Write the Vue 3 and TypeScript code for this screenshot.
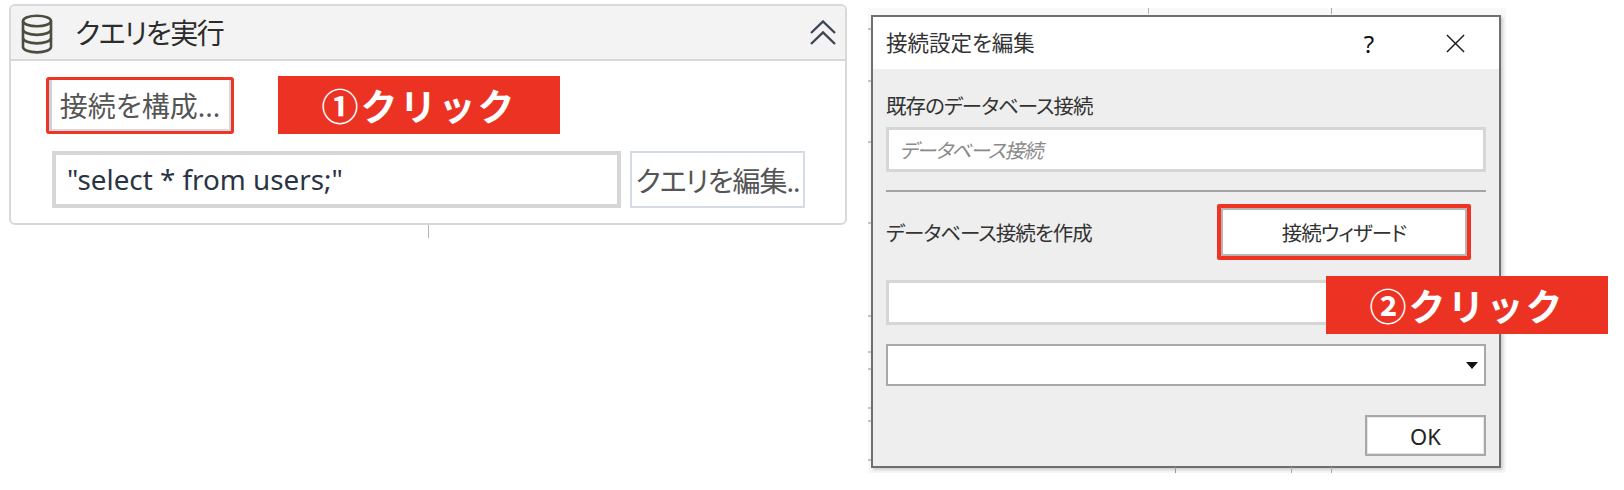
<script setup lang="ts">
const ticksLeft: number[] = [20, 72, 133, 214, 307, 343, 360, 399, 412, 451]
</script>

<template>
  <div class="page">
    <section class="card">
      <header class="card-head">
        <svg class="db" viewBox="0 0 32 40" fill="none" stroke="#4d4d3f" stroke-width="2.6">
          <ellipse cx="16" cy="7" rx="14" ry="5.2" />
          <path d="M2 7v26c0 3 6.2 5.4 14 5.4S30 36 30 33V7" />
          <path d="M2 15.500c0 3 6.200 5.400 14 5.400s14-2.400 14-5.400" />
          <path d="M2 24c0 3 6.200 5.400 14 5.400S30 27 30 24" />
        </svg>
        <span class="card-title">クエリを実行</span>
        <svg class="chev" viewBox="0 0 26 25" fill="none" stroke="#3c4654" stroke-width="2.400">
          <path d="M1 13 13 1.500 25 13" />
          <path d="M1 24 13 12.500 25 24" />
        </svg>
      </header>
      <div class="card-body">
        <div class="row-top">
          <button class="conn-btn">接続を構成...</button>
          <div class="tag">①クリック</div>
        </div>
        <div class="row-query">
          <div class="query">"select * from users;"</div>
          <button class="edit-btn">クエリを編集..</button>
        </div>
      </div>
      <i class="connector"></i>
    </section>

    <section class="dialog-wrap">
      <i v-for="y in ticksLeft" :key="y" class="tick" :style="{ top: y + 'px' }"></i>
      <i class="vtick vt1"></i>
      <i class="vtick vt2"></i>
      <i class="vtick vt3"></i>
      <i class="vtick vt4"></i>
      <i class="vtick vt5"></i>
      <div class="dialog">
        <header class="dlg-head">
          <span class="dlg-title">接続設定を編集</span>
          <span class="help">?</span>
          <svg class="close" viewBox="0 0 20 20" fill="none" stroke="#1a1a1a" stroke-width="1.500">
            <path d="M1 1 19 19M19 1 1 19" />
          </svg>
        </header>
        <div class="dlg-body">
          <div class="label first">既存のデータベース接続</div>
          <div class="field ph">データベース接続</div>
          <div class="divider"></div>
          <div class="row-create">
            <span class="label create">データベース接続を作成</span>
            <button class="wizard">接続ウィザード</button>
          </div>
          <div class="field blank"></div>
          <div class="combo"><i class="arrow"></i></div>
          <div class="foot"><button class="ok">OK</button></div>
        </div>
      </div>
      <div class="tag tag2">②クリック</div>
    </section>
  </div>
</template>

<style>
html, body { margin: 0; background: #fff; }
</style>

<style scoped>
.page {
  width: 1624px;
  height: 490px;
  overflow: hidden;
  display: flex;
  align-items: flex-start;
  box-sizing: border-box;
  padding: 4px 0 0 9px;
  background: #fff;
  font-family: "Noto Sans", "Noto Sans CJK JP", sans-serif;
  font-feature-settings: "palt";
  color: #333;
}
button { font-family: inherit; padding: 0; background: #fff; font-feature-settings: "palt"; }
.card {
  position: relative;
  width: 838px;
  height: 221px;
  box-sizing: border-box;
  border: 2px solid #d8d8d8;
  border-radius: 6px;
  flex: none;
}
.card-head {
  height: 53px;
  background: #f3f3f3;
  border-bottom: 2px solid #d8d8d8;
  border-radius: 4px 4px 0 0;
  display: flex;
  align-items: center;
  padding: 0 9px 0 10px;
}
.db { width: 32px; height: 40px; flex: none; margin-top: 2px; }
.card-title {
  font-size: 28px;
  letter-spacing: -1.400px;
  line-height: 30px;
  margin-left: 22px;
  flex: 1;
  color: #2c2c2c;
}
.chev { width: 26px; height: 25px; flex: none; }
.card-body { padding: 15px 0 0 35px; }
.row-top { display: flex; align-items: center; gap: 44px; }
.conn-btn {
  width: 188px;
  height: 57px;
  box-sizing: border-box;
  border: 3px solid #ee3524;
  border-radius: 3px;
  box-shadow: inset 3px 0 0 #c9d1de, inset -2px 0 0 #d5dbe6, inset 0 -2px 0 #d5dbe6;
  font-size: 28px;
  color: #555;
  white-space: nowrap;
  line-height: 1;
  padding-top: 2px;
}
.tag {
  width: 282px;
  height: 58px;
  background: #ec3323;
  color: #fff;
  font-weight: 700;
  font-size: 37px;
  letter-spacing: 2px;
  font-feature-settings: normal;
  display: flex;
  align-items: center;
  justify-content: center;
  font-family: "Noto Sans CJK JP", sans-serif;
  flex: none;
}
.row-query { display: flex; gap: 9px; margin: 17px 0 0 6px; }
.query {
  width: 569px;
  height: 57px;
  box-sizing: border-box;
  border: 4px solid #d6d6d6;
  background: #fff;
  font-size: 27.800px;
  line-height: 49px;
  padding-left: 11px;
  color: #2b3444;
}
.edit-btn {
  width: 175px;
  height: 57px;
  box-sizing: border-box;
  border: 2px solid #d5dbe6;
  font-size: 28px;
  letter-spacing: -1px;
  color: #555;
  white-space: nowrap;
  line-height: 1;
  overflow: hidden;
  padding-top: 2px;
}
.connector {
  position: absolute;
  left: 417px;
  top: 219px;
  width: 1px;
  height: 13px;
  background: #b5b5b5;
}

.dialog-wrap {
  position: relative;
  flex: none;
  width: 638px;
  height: 465px;
  margin: 4px 0 0 21px;
  padding: 7px 5px 5px 3px;
  box-sizing: border-box;
  background: #f9f9f9;
}
.tick {
  position: absolute;
  left: 0;
  width: 3px;
  height: 2px;
  background: #c4c4c4;
}
.vtick {
  position: absolute;
  width: 1px;
  height: 6px;
  background: #aab4c0;
}
.vt1 { left: 280px; top: 0; }
.vt2 { left: 463px; top: 0; background: #aaa; }
.vt3 { left: 307px; bottom: 0; background: #999; }
.vt4 { left: 423px; bottom: 0; background: #aaa; }
.vt5 { left: 463px; bottom: 0; background: #aaa; }
.dialog {
  width: 630px;
  height: 453px;
  box-sizing: border-box;
  border: 2px solid #6f6f6f;
  background: #eee;
  box-shadow: 2px 2px 3px rgba(0, 0, 0, 0.18);
}
.dlg-head {
  height: 52px;
  background: #fff;
  display: flex;
  align-items: center;
  padding-left: 13px;
}
.dlg-title { font-size: 21.500px; flex: 1; color: #333; line-height: 30px; }
.help { font-size: 24px; color: #111; width: 30px; text-align: center; font-family: "Noto Sans", sans-serif; margin-right: 62px; }
.close { width: 19px; height: 19px; margin-right: 34px; flex: none; }
.dlg-body { padding: 0 13px; }
.label { font-size: 20.500px; letter-spacing: -1px; line-height: 28px; color: #333; white-space: nowrap; }
.label.first { margin-top: 23px; }
.label.create { margin-top: 2px; }
.field {
  height: 45px;
  box-sizing: border-box;
  border: 3px solid #d6d6d6;
  background: #fff;
}
.ph {
  margin-top: 7px;
  font-size: 20px;
  letter-spacing: -1.250px;
  font-style: italic;
  color: #8b8b8b;
  padding-left: 10px;
  line-height: 41px;
}
.divider { height: 2px; background: #a3a3a3; margin-top: 18px; }
.row-create {
  display: flex;
  align-items: center;
  justify-content: space-between;
  height: 56px;
  margin-top: 12px;
  padding-right: 15px;
}
.wizard {
  width: 254px;
  height: 56px;
  box-sizing: border-box;
  border: 4px solid #ee3524;
  border-radius: 2px;
  box-shadow: inset 0 0 0 2px #b5b5b5;
  font-size: 20.500px;
  letter-spacing: -1px;
  color: #333;
}
.blank { margin-top: 20px; }
.combo {
  position: relative;
  margin-top: 19px;
  height: 42px;
  box-sizing: border-box;
  border: 2px solid #a8a8a8;
  background: #fff;
}
.arrow {
  position: absolute;
  right: 6px;
  top: 16px;
  width: 0;
  height: 0;
  border-left: 6px solid transparent;
  border-right: 6px solid transparent;
  border-top: 7px solid #111;
}
.foot { display: flex; justify-content: flex-end; margin-top: 29px; }
.ok {
  width: 121px;
  height: 41px;
  box-sizing: border-box;
  border: 2px solid #a8a8a8;
  box-shadow: inset 0 0 0 1px #e6e6e6;
  font-size: 22px;
  color: #222;
}
.tag2 {
  position: absolute;
  left: 458px;
  top: 268px;
}
</style>
